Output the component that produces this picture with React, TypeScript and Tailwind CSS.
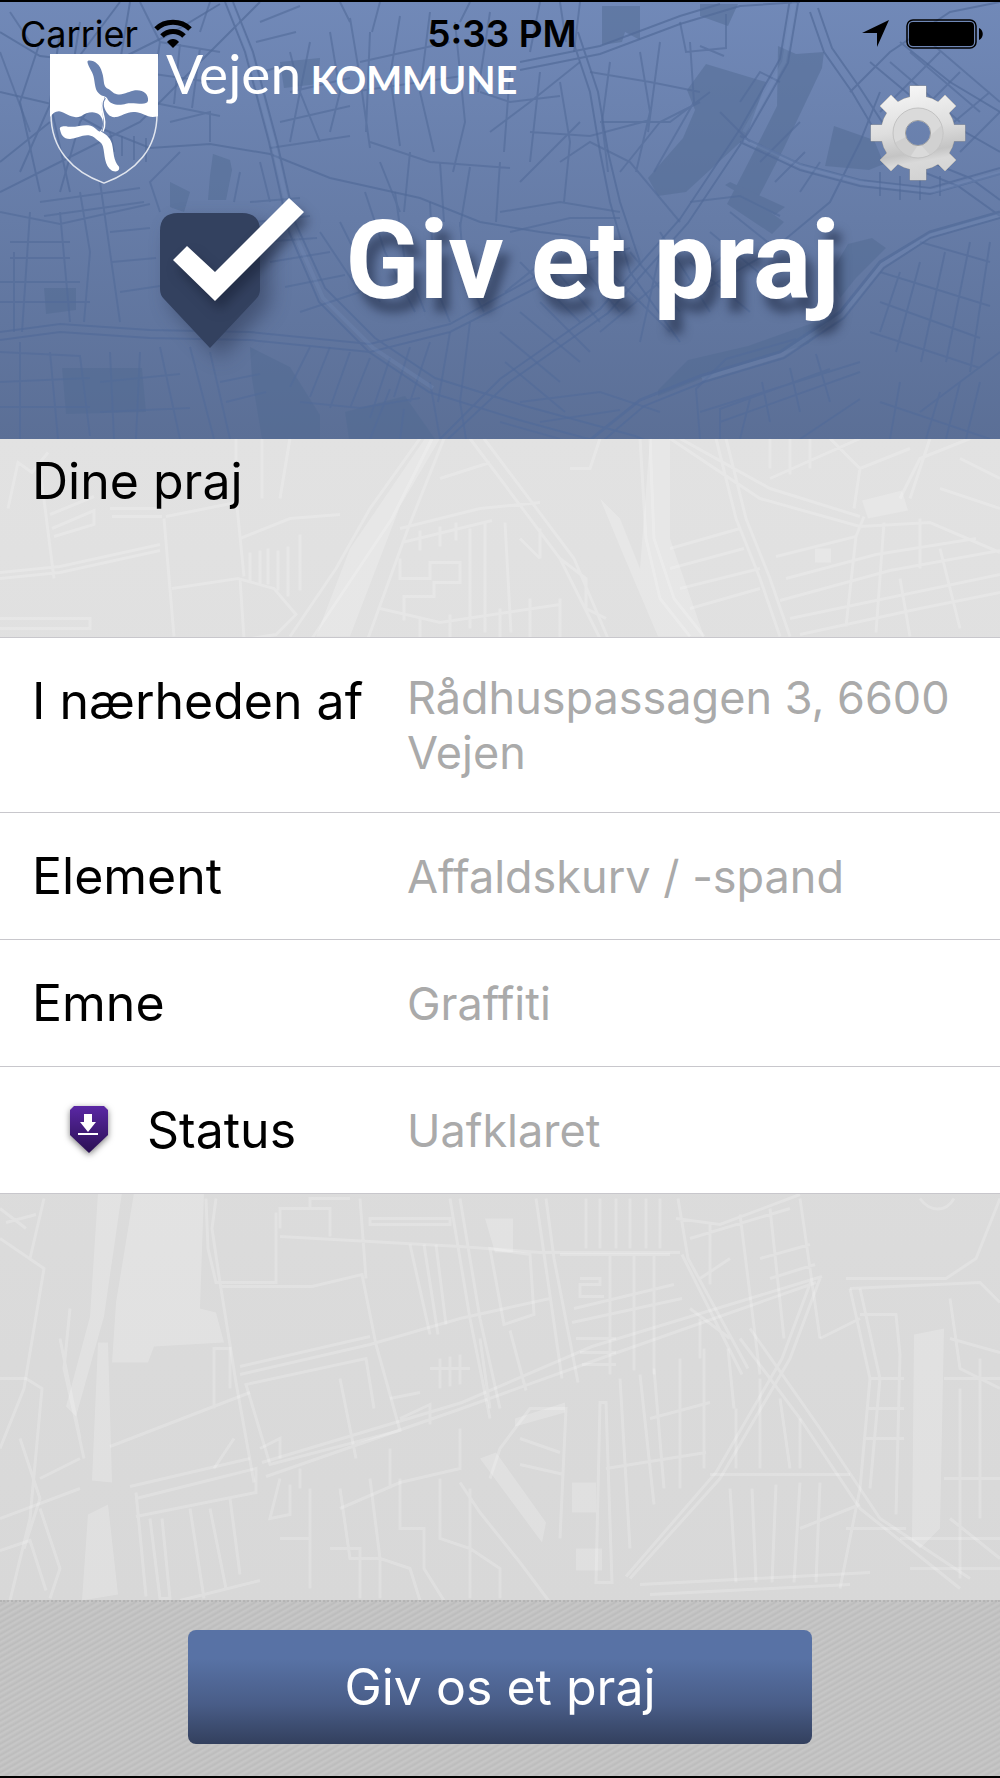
const road = "fill-none stroke-[#526b99]";

function HeaderMap() {
  return (
    <svg
      aria-hidden="true"
      className="pointer-events-none absolute inset-0 h-full w-full"
      viewBox="0 0 1000 437"
      preserveAspectRatio="xMidYMid slice"
    >
      <g className="fill-[#526b93] opacity-50">
        <path d="M706 62l60 18-20 55-60 55-28 4-10-18 35-40 12-28-8-20z" />
        <path d="M778 44l18 8 28-2-2 16-38 80-28 54 28 20-12 12-45-30 38-74 12-24z" />
        <path d="M602 4h38v34l-15-8-3 10-20 3z M700 2h38l-10 22-28-10z" />
        <path d="M834 124l40 14 10 24-15 6-44-4z" />
        <path d="M213 152l17 6 2 10-6 30h-18l2-24z M280 60l40-4-2 26-34 4z M170 180l20 10-6 20-14-5z" />
        <path d="M730 180l55 25-10 8-50-30z M872 236l14 10-30 30-16 20-10-24 18-30z" />
        <path d="M250 345l40 20 30 48v24h-58l-10-60z M658 388l30-30 60-14 90-32-30 30-90 28-60 24z" />
        <path d="M62 366h80l4 44-80 2z M345 410l60-16 30 43h-86z M44 286h32v22l-30 4z" />
      </g>
      <g className={road + " opacity-70"} strokeWidth="2">
        <path d="M0 90l60 14 40 22 50 20 60-4 60 10 60 24 90 20 60 24 60 10 50 6" />
        <path d="M225 0l20 50 24 90 20 90 30 70 50 50 60 40 90 28 110 30 60 32" />
        <path d="M233 0l20 50 24 90 18 80 30 66 50 50 60 40 90 28 110 30 70 28" />
        <path d="M0 30l40 24 70 8 60-30 50-30 M120 0l-60 80-40 90 M130 0l-10 60-40 60-20 70" />
        <path d="M0 190l60-30 80-40 60-60 60-60 M0 160l50-40M40 40l-20 60 20 90M60 30l-10 70 20 90M80 20l-8 50" />
        <path d="M520 68l80-16 80-30 60-18 60-4 M520 60l80-16 80-30 40-12" />
        <path d="M570 30l20 60 10 60 10 50 20 70 50 70 M578 30l20 60 10 60 12 50 20 60" />
        <path d="M440 437l60-60 100-70 80-90 60-90 40-70 10-60" />
        <path d="M448 437l60-56 100-70 80-90 60-90 40-70 10-60" />
        <path d="M810 10l14 40 28 40 26 44 30 30 50 20 42 30" />
        <path d="M818 6l14 40 28 40 26 40 34 30 50 20 30 22" />
        <path d="M740 134l60 28 60 16 70 8 70-20 M740 140l60 28 60 16 70 8 70-20" />
        <path d="M850 90l40-40 60-40 50-10 M870 60l60 50 70 40 M900 40l50 40 50 30 M880 90l-20 50-30 60-60 50-70 40" />
        <path d="M1000 210l-70 20-50 30-40 50-60 40-80 24-60 24-50 40" strokeWidth="3" />
        <path d="M1000 216l-70 20-46 30-40 50-60 40-80 24-60 24-40 34" />
        <path d="M0 330l60-8 90 6 100 2 120 12 80-20 90-50 90-26" />
        <path d="M0 338l60-8 90 6 100 2 120 12 80-20 90-46" />
      </g>
      <g className={road + " opacity-60"} strokeWidth="2">
        <path d="M290 50l10 40-10 50M310 40l-10 50 20 50M330 30l10 60-10 40M350 16l10 60 10 70M280 120l70-16M270 146l80-12M290 90l60-14M360 60l90-20M352 90l110-16M370 30l-4 100M400 14l-10 60 10 70M430 10l-10 80 14 60M455 20l10 100-12 50" />
        <path d="M370 140l60 20 80 6M380 160l20 50M410 150l-6 60M440 160l4 60M470 165l-10 60M500 160l-4 60" />
        <path d="M480 90l30 10 50-6M490 130l40-30 50-40M510 70l-6 80 M540 70l-10 90M560 80l10 60-6 60M520 180l60-60M530 130l60 4 60-16M590 70l60 10 50 10M610 60l-8 60 6 50M640 50l10 60-14 60M660 40l-12 90M690 40l4 60-40 70M600 120l70 0 40-30M620 170l40-50 40-20M680 20l6 30 40-4 0-34M700 44l24 10 M560 160l30-20 40 20 50 60" />
        <path d="M140 0l20 40 60 10M160 40l-8 50M180 42l-6 60M200 46l-8 60M140 70l70 10M150 100l70 14M110 130l4 20M122 134v20M134 134v24M146 136v24" />
        <path d="M0 210l60 12 90-20M10 240h60M10 256h60M30 210l-8 120M60 210l10 110M80 190l10 60-6 70M100 180l20 140M0 280h80M0 300h90M14 250v80" />
        <path d="M0 350l80 4 10 80M20 340v97M50 350l8 87M0 380l90-4M0 405h90M110 350l4 87M140 350l-4 87M160 345l20 92M190 345l24 92M100 380l80-8M100 410l90-4M210 350l20 87M220 380l40-8M226 400l40-10" />
        <path d="M250 200l50-4M255 220l55-6M262 240l55-4M270 260l60-10M285 285l60-12M300 310l60-20M320 230l40 60M340 220l40 80M365 190l20 60 30 60M395 190l10 70 20 50M430 200l4 80 16 40M460 220l4 50 20 40" />
        <path d="M310 345l-20 40M330 345l-20 50M350 350l-20 56M370 356l-20 50M390 356l-20 60M410 345l-16 50M430 340l-20 60M450 330l-12 70M470 320l-10 80M300 400l60 6 60-10M370 437l20-50M430 380l10 57M400 437l4-30M460 400l6 37" />
        <path d="M500 210l60-10 60 10M510 230l60-14 50 0M505 290l50-40M520 260l60 60M540 250l60 70M560 240l60 70M500 330l60 50M520 310l60 50M540 300l50 50M505 360l60 50M520 400l80-10 60 20M540 420l80-12M610 270l60 60M630 250l50 60M600 330l60-50M640 340l20-90M660 230l50 80M690 260l60 50M710 230l60 50M730 210l50 40M680 290l60-50M690 200l50-6 40 20" />
        <path d="M760 160l40-40M775 180l30-30M800 190l20-30M740 100l20-30 20 10M720 110l30 30M880 170v24M900 174v24M920 176v22M940 174v20M890 60l70 60M910 50l70 60M930 40l70 60M880 110l60-60M900 130l60-60M930 140l60-50M960 150l40-40" />
        <path d="M900 270l-20 60M920 260l-24 90M945 250l-24 110M970 240l-24 120M990 240l-20 130M880 300l100 36M870 330l110 36M880 270l110 34M920 240l70 20M1000 350l-80 60M900 380l-10 57M880 400l110 37M940 390l-14 47M960 380l-14 57M980 380l-14 57" />
        <path d="M700 437l-4-50 30-30 70-20M720 437v-30l110-40M740 437l10-40M770 420l-8-40M800 410l-10-44M830 400l-14-48M700 410l160-50M720 420l140-50M800 437l60-40M500 420l60 17" />
        <path d="M210 0l-10 30M260 20l40-16M256 40l40-10M262 70l20-6M380 0l-8 30M340 0l10 20M470 0l-10 20M490 10l-12 80M540 0l-10 50M560 0l6 40M580 0l-6 50M0 50l30 80M10 10l20 30M170 120l40-10 0 30M180 150l-30 30 10 30M240 170l-6 30M260 160l10 40M40 200l100-14M44 214l100-14M110 230l40-4M112 260l44-4M120 290l40-6" />
      </g>
      <path
        className="fill-none stroke-[#7f97c4] opacity-20"
        strokeWidth="4"
        d="M229 0l20 50 24 90 20 88 30 68 50 50 60 40M744 130l40-70 10-60M744 137l60 28 60 16 70 8 66-18M1000 213l-70 20-48 30-40 50-60 40-80 24"
      />
    </svg>
  );
}

function BodyMap() {
  return (
    <svg
      aria-hidden="true"
      className="pointer-events-none absolute inset-0 h-full w-full fill-none stroke-white/20"
      viewBox="0 0 1000 1162"
      preserveAspectRatio="xMidYMid slice"
    >
      {/* streets above the list */}
      <g strokeWidth="3">
        <path d="M0 134l60-6 100-22M0 140l60-6 100-22M8 70l10-46 14 10 16-20M40 30l14 110M50 76l44-18M52 90l42-18v14l-40 12M110 70h50M112 78h50M164 80l10 118M166 78l70-14M236 0v58l8 80M262 0v60M290 0l-10 60M240 100l50-20 50-4M172 150l66-10 36 10 22 26-20 20-100 16M240 140l4 60M250 114v30M260 112v34M268 110v36M278 112v40M288 108v50M300 96v56M0 180h90v10H0" />
        <path d="M432 0l-40 80-40 60-40 60M420 0l-50 70-34 60-46 68M444 0l-36 90-40 110M470 0l90 120 40 80M484 0l90 120 34 80M400 90l80-20 60-6M402 104l90-22M420 92v20M440 88v20M456 84v18M470 90v100M485 84v110M505 84l6 110M400 120v20h30v-16h30v20h-26v14h-30v24M380 170l60 14 120-18M420 180v20M450 176v24M500 170v30M530 160v40M560 160v40M560 120l26 20v30l20 10M570 30h20l10-30M440 40l50-16M520 100l20 20M540 90v30" />
        <path d="M650 0l4 100 20 60 30 38M640 0l6 100 14 60 30 38M716 0l20 80 24 60 20 58M726 0l20 80 24 60 20 58M670 0l90 60 100 28 70-4 70 30M680 0l90 50 90 28M770 40l90-40M670 110l70-20M670 130l74-20M680 150l80-20M690 170l70-20M776 118l80-20 8-20M786 140l90-24 100-16M780 162l110-30 110-20M790 180l210-44M800 196l120-26 80-16M856 98l-10 90M884 84l-8 110M920 80v50M940 110l20 80M900 140l10 58M830 0l30 30 50-20M860 30l-6 40M900 60l20-40 50-20M930 0l-20 60M770 0v30M790 0v36M810 0v30M960 20l40 20M940 50l60 20" />
      </g>
      <g stroke="none" className="fill-white/20">
        <path d="M425 0l-75 110-34 88h34l50-130 40-68zM600 60l20 20 20 50 10-130h20l0 100 34 98h-46l-34-80zM862 62l40-10 6 20-40 8zM815 110h16v14h-16z" />
        <path d="M98 754l24 0-18 124-28 100-10-10 24-90zM134 754h70l-4 116 16 4 8 30-70 4-6 16h-36l4-60zM98 904l10 0 4 140-20-2zM88 1076l20-10 10 90-36 6zM485 780h28v34h-18zM914 896l30-6-4 200-20 20-8-8z" />
        <path d="M572 1044h24v30h-24zM576 1110h26v22h-26zM480 1020l16-6 50 70-4 20zM515 980l50-16v10l-50 14z" />
      </g>
      {/* streets below the list */}
      <g strokeWidth="3">
        <path d="M0 800l44 30-20 120-24 60M0 770l26 20M6 784l30-8M30 820l14-60M216 760l-4 30 8 54 16 100 18 100M206 760l2 50 8 34h60v-70M222 848h90l50-12 14 70 24 86-130 34-24-80 120-26 8 50M240 928l130-30M240 936l130-30 90-26 90-20M360 760l6 80M280 798l180 10 80 6 140 0M280 790v-20h50v28M310 770v-10h40M450 760l20 120 20 100M460 760l20 120 20 90M536 760l26 180M546 760l8 60 24 124M370 780h80v6h-80z" />
        <path d="M410 806l20 90M424 806l14 90M436 806l10 80M490 810l40 6 4 60-30 10zM560 816h110M586 760v50M600 760v50M616 760v50M630 760v50M646 760v50M660 760v50M610 816v120M634 816v116M654 816v120M572 884l110-24M574 870l100-24M576 900h40M580 914h36M582 926h34M580 840h20v6h-20v12h24M682 816l60 120M678 760l10 60 60 110M676 780l44 6 80-30M690 800l100-30M710 786v60M740 776l20 160M770 770l14 130M800 760l20 140M760 820l50-14M770 840l45-14M700 840l30-20 M690 870l40 30M700 880v40" />
        <path d="M262 1024l200-60 130-56 230-70M266 1038l190-66 150-54 210-74M340 940l16 80M430 930h40M440 920v30M450 918v30M460 916v30M480 900l10 70M510 892l16 60M390 960l30-6M400 980l30-14v20M300 1030v20M390 1010v40M460 990v40l-60 14-60 26M820 840l-30 80-70 120-90 100M812 840l-30 80-66 114-90 104M740 900l60 80 60 90 100 80M750 890l70 100 60 90 90 60" />
        <path d="M600 964l-4 180h16l-6-180zM620 940l10 170M640 936l14 130M654 930l10 120M680 920v130M704 910v120M728 910l6 60M606 1030l100-16M650 980l60-16M710 1036h140M736 970v60M760 940v90M780 960l10 70M800 980v50M730 1050l6 94M752 1050l4 94M776 1046l-4 98M800 1044l-6 100M820 1044l-4 100M850 850l20 90-10 110-20 100M860 850l20 90-10 110M860 876h36l4 40-4 160M870 940h34M866 970h38M866 1000h38M820 900l40-20M846 1090l60 0M800 1090l60-24" />
        <path d="M460 1044l20 30 40 50 30 40M490 1040l10-30 30-40h36l-6 130M520 1000l40 14M520 1026l44 10M130 1048l120-28M136 1060l120-30v24l-120 24M136 1054l10 104M150 1080l10 80h10l-8-80M190 1070l14 90M210 1070l16 80M230 1060l10 76M280 1040l-10 40 20-4v-30M310 1050v100M340 1050l10 70 30 0v40M370 1040l10 80 30 10 10 32M400 1040v50h24v40l20 32M440 1040v60l30 10v50M470 1050v60l30 20v30M280 1100h30v50M330 1110h30v50M180 1162l80-20M640 1146l230-12M650 1156l200-10" />
        <path d="M846 840h100l30-20 24-60M850 850l130-6 20 20M950 860l10 70 40 20M920 760c10 14 26 14 34 0M950 900l50 14M944 940h56M944 1040h56M960 950v190M980 920v160M950 1080l50 40M0 940h26l16 10-12 130-20 82M20 1000l20 60-16 50M60 900l20 100M70 870l-6 60 20 90M80 1020l-40 20M110 1008l140-54M230 950v-40h-16v60M214 1030l20-30M40 1070l20 60-10 30M260 1010l20-10v20" />
        <path d="M900 1100h100M910 1130h90M0 1080l80-30M0 1112l30-10 16 50" />
      </g>
    </svg>
  );
}

function Crest() {
  return (
    <svg aria-hidden="true" className="h-[132px] w-[108px] shrink-0" viewBox="0 0 108 138" preserveAspectRatio="none">
      <path
        d="M1 64C1 100 22 124 54 136C86 124 107 100 107 64"
        className="fill-none stroke-white/80"
        strokeWidth="1.5"
      />
      <path
        className="fill-white"
        d="M0 1H108V66C98 69 94 63 87 62C78 60 72 66 66 67C60 68 56 63 54 56C53 51 55 48 57 46C52 52 51 58 53 63C56 70 55 77 51 82C54 84 60 87 62 95C64 104 63 112 69 119C70 123 67 125 62 123C54 118 55 106 53 98C52 93 48 92 44 88C36 83 28 89 20 90C13 90 11 85 10 80C9 77 13 76 18 77C28 78 36 73 43 77C46 79 48 82 50 82C54 78 54 70 50 65C44 60 37 62 31 66C22 70 16 62 9 61C5 61 2 64 0 67Z"
      />
      <path
        className="fill-[#6a82b0]"
        d="M38 8C44 7 50 12 52 20C55 29 52 35 59 38L64 42C72 46 78 40 85 39C93 38 99 43 98 50C97 56 84 51 76 53C70 55 60 55 57 47C54 44 51 46 47 40C44 34 45 26 42 20C40 16 36 9 38 8Z"
      />
      <path className="fill-none stroke-[#6a82b0]" strokeWidth="2" d="M55 47C48 56 58 68 53 80" />
      <path className="fill-none stroke-white" strokeWidth="1.5" d="M54 47C47 58 59 68 53 82" />
    </svg>
  );
}

function WifiIcon() {
  return (
    <svg aria-hidden="true" className="h-[30px] w-[38px]" viewBox="0 0 38 30">
      <path className="fill-none stroke-black" strokeWidth="5" d="M2 10C11 1 27 1 36 10" />
      <path className="fill-none stroke-black" strokeWidth="5" d="M8 17C14 11 24 11 30 17" />
      <path d="M13 23C16 19 22 19 25 23L19 29Z" />
    </svg>
  );
}

function StatusBar() {
  return (
    <div className="relative grid h-[51px] grid-cols-[1fr_auto_1fr] items-end pr-4 pl-5 text-black">
      <div className="flex items-center gap-4">
        <span className="text-[36px] leading-[38px]">Carrier</span>
        <WifiIcon />
      </div>
      <span className="text-center text-[37px] leading-[38px] font-semibold">5:33 PM</span>
      <div className="flex h-[38px] items-center justify-end gap-4">
        <svg aria-hidden="true" className="h-7 w-7" viewBox="0 0 28 28">
          <path d="M27 0L15 27V13H0Z" />
        </svg>
        <svg aria-hidden="true" className="h-[30px] w-[78px]" viewBox="0 0 78 30">
          <rect x="1" y="1" width="69" height="28" rx="6" className="fill-none stroke-black" strokeWidth="1.5" />
          <rect x="3" y="3" width="65" height="24" rx="4" />
          <path d="M73 9C78 11 78 19 73 21Z" />
        </svg>
      </div>
    </div>
  );
}

const straightTeeth = "M-8-47H8V-30H-8Z M47-8V8H30V-8Z M-8 47H8V30H-8Z M-47-8V8H-30V-8Z";
const diagonalTeeth =
  "M27-38L38-27L26-15L15-26Z M38 27L27 38L15 26L26 15Z M-27 38L-38 27L-26 15L-15 26Z M-38-27L-27-38L-15-26L-26-15Z";

function GearIcon() {
  return (
    <svg aria-hidden="true" className="h-24 w-24" viewBox="-48 -48 96 96">
      <defs>
        <linearGradient id="gear" gradientUnits="userSpaceOnUse" x1="-8" y1="-47" x2="8" y2="47">
          <stop offset="0" stopColor="#f6f6f6" />
          <stop offset="0.45" stopColor="#dedede" />
          <stop offset="0.7" stopColor="#c4c4c4" />
          <stop offset="0.8" stopColor="#d9d9d9" />
          <stop offset="1" stopColor="#d2d2d2" />
        </linearGradient>
        <mask id="gearHole">
          <rect x="-48" y="-48" width="96" height="96" fill="white" />
          <circle r="12" fill="black" />
        </mask>
      </defs>
      <g mask="url(#gearHole)">
        <g fill="#8a8a8a" stroke="#9a9a9a" strokeWidth="1" strokeLinejoin="round">
          <circle r="37" />
          <path d={straightTeeth} />
          <path d={diagonalTeeth} />
        </g>
        <g fill="url(#gear)">
          <circle r="37" />
          <path d={straightTeeth} />
          <path d={diagonalTeeth} />
        </g>
        <circle r="25" fill="#dadada" stroke="#c2c2c2" strokeWidth="1" />
        <path d="M12 3L24-8A25 25 0 0 1 12 22L3 12Z" fill="#cccccc" opacity="0.6" />
        <path d="M-12 4L-24 10A25 25 0 0 0-8 24L0 12Z" fill="#c8c8c8" opacity="0.6" />
        <circle r="12.5" fill="none" stroke="#9a9a9a" strokeWidth="1" />
      </g>
    </svg>
  );
}

function PrajMark() {
  return (
    <svg aria-hidden="true" className="h-[154px] w-[145px] shrink-0 overflow-visible" viewBox="0 0 145 154">
      <path
        className="fill-[#33415f] drop-shadow-[10px_10px_10px_rgba(30,40,65,0.45)]"
        d="M18 16H82Q100 16 100 34V92Q100 98 96 102L50 151L4 102Q0 98 0 92V34Q0 16 18 16Z"
      />
      <path
        className="fill-white drop-shadow-[5px_9px_6px_rgba(20,28,48,0.5)]"
        d="M27 49L55 75L129 1L144 15L55 104L13 63Z"
      />
    </svg>
  );
}

function StatusPin() {
  return (
    <svg aria-hidden="true" className="h-12 w-10 overflow-visible drop-shadow-[0_2px_3px_rgba(0,0,0,0.5)]" viewBox="0 0 40 48">
      <defs>
        <linearGradient id="pin" x1="0" y1="0" x2="0" y2="1">
          <stop offset="0" stopColor="#5a27a4" />
          <stop offset="1" stopColor="#2a1052" />
        </linearGradient>
      </defs>
      <path fill="url(#pin)" d="M5 0H35L39 4V29L20 47L1 29V4Z" />
      <path className="fill-white" d="M15 8H23V16H27L19 26L11 16H15Z M9 27H29V29H9Z" />
    </svg>
  );
}

const rows = [
  { label: "I nærheden af", value: "Rådhuspassagen 3, 6600 Vejen" },
  { label: "Element", value: "Affaldskurv / -spand" },
  { label: "Emne", value: "Graffiti" },
  { label: "Status", value: "Uafklaret", pin: true },
];

export default function App() {
  return (
    <div className="flex min-h-screen flex-col border-y-2 border-black bg-[#dedede] font-['Inter',sans-serif]">
      <header className="relative overflow-hidden bg-linear-to-b from-[#7189b8] to-[#5b6f96] pb-[88px]">
        <HeaderMap />
        <StatusBar />
        <div className="relative flex items-start justify-between pr-[34px] pl-[50px]">
          <div className="flex items-start gap-2 text-white">
            <Crest />
            <p className="font-['Lato',sans-serif] text-[38px] leading-10">
              <span className="text-[55px]">Vejen</span> <span className="font-bold">KOMMUNE</span>
            </p>
          </div>
          <button type="button" aria-label="Indstillinger" className="mt-8 cursor-pointer">
            <GearIcon />
          </button>
        </div>
        <div className="relative mt-3 flex items-start justify-center gap-10">
          <PrajMark />
          <h1 className="font-['Roboto',sans-serif] text-[109px] leading-[128px] font-bold text-white [text-shadow:8px_14px_10px_rgba(30,40,65,0.55)]">
            Giv et praj
          </h1>
        </div>
      </header>

      <main className="relative flex grow flex-col bg-linear-to-b from-[#e2e2e2] to-[#d8d8d8]">
        <BodyMap />
        <h2 className="relative h-[198px] px-8 pt-3 text-[50px] leading-[60px]">Dine praj</h2>
        <dl className="relative border-t border-[#c8c7cc] bg-white">
          {rows.map((row) => (
            <div key={row.label} className="flex min-h-[127px] items-start border-b border-[#c8c7cc] p-8">
              <dt className="flex w-[375px] shrink-0 items-center text-[50px] leading-[62px] text-black">
                {row.pin && (
                  <span className="mr-[38px] ml-[37px]">
                    <StatusPin />
                  </span>
                )}
                {row.label}
              </dt>
              <dd className="self-center text-[45px] leading-[55px] text-[#aaaaaa]">{row.value}</dd>
            </div>
          ))}
        </dl>
      </main>

      <footer className="flex justify-center border-t-2 border-dotted border-[#b4b4b4] bg-[#c8c8c8] bg-[repeating-linear-gradient(150deg,transparent_0px,rgba(0,0,0,0.06)_3px,transparent_5px)] px-8 pt-7 pb-8">
        <button
          type="button"
          className="h-[114px] w-full max-w-[624px] cursor-pointer rounded-lg bg-linear-to-b from-[#5872a5] from-25% via-[#495d88] via-65% to-[#33405e] text-[50px] text-white"
        >
          Giv os et praj
        </button>
      </footer>
    </div>
  );
}
